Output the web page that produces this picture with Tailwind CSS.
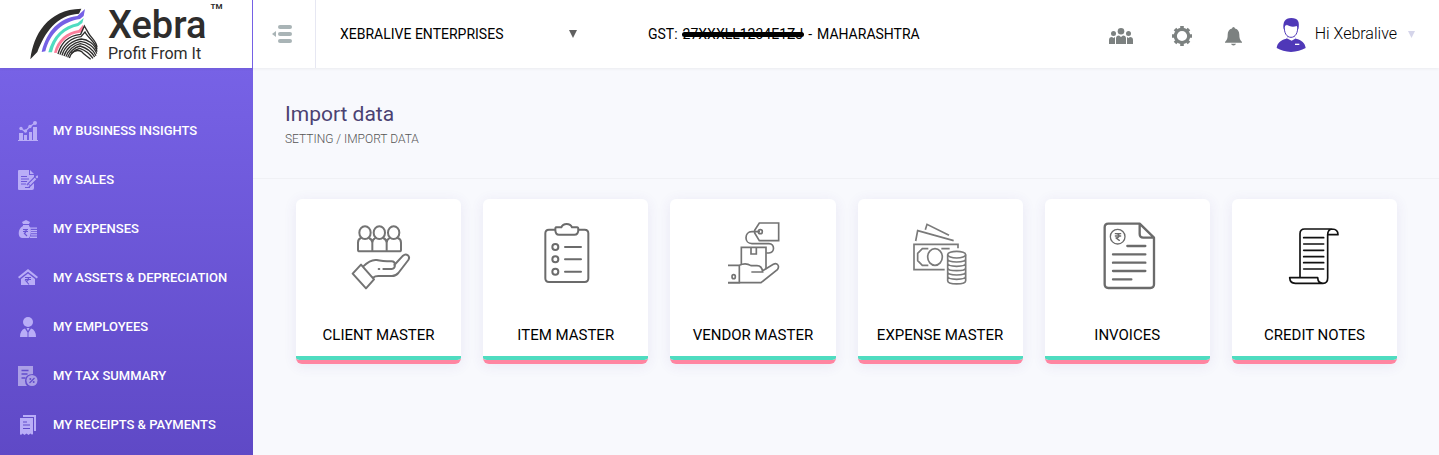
<!DOCTYPE html>
<html lang="en">
<head>
  <meta charset="UTF-8">
  <meta name="viewport" content="width=device-width, initial-scale=1.0">
  <title>Import data</title>
  <script src="https://cdn.jsdelivr.net/npm/@tailwindcss/browser@4"></script>
</head>
<body class="font-[Roboto,sans-serif]">
<div class="min-h-screen flex flex-col bg-[#f8f9fd]">

  <!-- top bar -->
  <header class="h-[68px] flex items-stretch bg-white shadow-[0_1px_3px_rgba(0,0,0,0.06)] z-10">
    <a href="#" class="w-[253px] shrink-0 flex gap-[10px] pl-[30px] border-r border-[#7561e5]">
      <svg class="w-[68px] h-[53px] mt-2" viewBox="90 24 204 159" fill="none" aria-hidden="true">
        <path fill="#2e2d2c" d="M91 178C100 105 142 28 244 26L237 41C170 44 134 98 112 156Z"/>
        <path fill="#7560e5" d="M125 156C140 92 178 55 232 48L255 27L251 48L240 57C190 64 150 98 136 154Z"/>
        <path fill="#4fdcc0" d="M145 157C156 110 190 77 233 69L251 54L247 69L235 78C195 86 166 112 156 157Z"/>
        <path fill="#fb7e9b" d="M162 158C172 118 200 96 236 90L249 74L250 92L240 98C205 102 180 124 170 159Z"/>
        <g stroke="#2e2d2c" stroke-width="4">
          <path d="M174 162C184 125 210 106 242 103L253 78L266 100C274 114 290 124 291 142"/>
          <path d="M180 164C189 133 213 113 243 110L255 96C262 112 286 124 291 148"/>
          <path d="M186 166C194 139 217 121 244 117C262 118 285 132 291 155"/>
          <path d="M192 168C199 145 220 128 242 124C262 126 284 141 290 161"/>
          <path d="M198 170C204 151 222 135 241 131C260 134 280 148 288 167"/>
          <path d="M203 172C207 156 224 142 240 138C258 143 274 154 284 171"/>
          <path d="M208 174C212 160 225 149 239 145C254 150 268 160 279 175"/>
          <path d="M214 160C224 151 235 149 245 155C252 164 262 168 272 178"/>
        </g>
      </svg>
      <div class="pt-[3px] text-[#2e2d2c]">
        <div class="flex items-start gap-1">
          <span class="text-[38px] leading-[44px] font-medium">Xebra</span>
          <span class="text-[8px] leading-2 font-bold">TM</span>
        </div>
        <div class="text-[16px] leading-[14px] whitespace-nowrap">Profit From It</div>
      </div>
    </a>

    <button type="button" aria-label="Toggle menu" class="w-[63px] shrink-0 flex items-center justify-center pr-1 border-r border-[#e6e7f2]">
      <svg class="w-5 h-5" viewBox="0 0 20 20" fill="#a9b4b6">
        <path d="M0 10l4-3v6z"/>
        <rect x="6" y="1" width="14" height="4" rx="2"/>
        <rect x="6" y="8" width="14" height="4" rx="2"/>
        <rect x="6" y="15" width="14" height="4" rx="2"/>
      </svg>
    </button>

    <div class="flex-1 flex items-center pl-6 pr-6">
      <div class="relative w-60 shrink-0">
        <select aria-label="Company" class="appearance-none w-full bg-transparent text-[14px] leading-5 text-black">
          <option>XEBRALIVE ENTERPRISES</option>
        </select>
        <svg class="absolute right-[3px] top-2 w-2 h-2 pointer-events-none" viewBox="0 0 8 8"><path fill="#606060" d="M0 0h8L4 8z"/></svg>
      </div>

      <p class="ml-17 flex gap-[5px] text-[14px] leading-5 text-black whitespace-nowrap">
        <span>GST:</span>
        <span class="relative">27XXXLL1234E1ZJ<span class="absolute -inset-x-px top-2 h-[5px] rounded-full bg-black"></span></span>
        <span>-</span>
        <span>MAHARASHTRA</span>
      </p>

      <div class="ml-auto flex items-center">
        <button type="button" aria-label="Users">
          <svg class="w-6 h-4 mt-1" viewBox="0 0 24 16" fill="#7c8180">
            <circle cx="12" cy="3.300" r="3.300"/>
            <circle cx="4.500" cy="5.500" r="2.500"/>
            <circle cx="19.500" cy="5.500" r="2.500"/>
            <path d="M7 16v-5.500Q7 7.500 10 7.500l2 1.500 2-1.500q3 0 3 3V16z"/>
            <path d="M0 16v-4q0-3 3-3l1.500 1L6 9v7zM24 16v-4q0-3-3-3l-1.500 1L18 9v7z"/>
          </svg>
        </button>
        <button type="button" aria-label="Settings" class="ml-[39px]">
          <svg class="w-5 h-5 mt-1" viewBox="0 0 20 20" fill="none" stroke="#7c8180">
            <circle cx="10" cy="10" r="6.700" stroke-width="3.200"/>
            <path stroke-width="3.600" d="M10 0v2.500M10 17.500V20M0 10h2.500M17.500 10H20M3 3l1.700 1.700M15.300 15.300L17 17M3 17l1.700-1.700M15.300 4.700L17 3"/>
          </svg>
        </button>
        <button type="button" aria-label="Notifications" class="ml-[33px]">
          <svg class="w-[17px] h-5 mt-1" viewBox="0 0 17 20" fill="#7c8180">
            <path d="M8.500 1q1.300 0 1.500 1.500c3 .7 4.300 3 4.300 6 0 4 .7 5.500 2.700 7.500v.8H0V16c2-2 2.700-3.500 2.700-7.500 0-3 1.300-5.300 4.300-6Q7.200 1 8.500 1zM6 17.800h5q-.5 1.700-2.500 1.700T6 17.800z"/>
          </svg>
        </button>
        <button type="button" class="ml-[34px] flex items-center">
          <svg class="w-[30px] h-[34px] mt-[2px]" viewBox="0 0 90 102" aria-hidden="true">
            <path fill="#4f38b8" d="M2 90C4 74 14 66 31 62L37 53H54L60 62C77 66 87 74 89 90Q70 101 45 102Q20 101 2 90Z"/>
            <path fill="#fff" d="M32 61L37 54H54L60 61L47 68z"/>
            <path fill="#fff" stroke="#4f38b8" stroke-width="3" d="M25 20C23 45 32 58 45 58S67 45 65 20z"/>
            <path fill="#4f38b8" d="M23 34C20 12 26 0 46 0C66 0 72 10 67 34L62 24C50 29 39 25 32 19Q25 24 23 34Z"/>
            <path stroke="#fff" stroke-width="4" d="M57 79h13"/>
          </svg>
          <span class="ml-[9px] text-[16px] leading-5 font-light text-black">Hi Xebralive</span>
          <svg class="ml-[11px] w-[7px] h-[7px]" viewBox="0 0 7 7"><path fill="#d5d5ea" d="M0 0h7L3.500 7z"/></svg>
        </button>
      </div>
    </div>
  </header>

  <div class="flex-1 flex">
    <!-- sidebar -->
    <nav class="w-[253px] shrink-0 pt-[38px] bg-linear-to-b from-[#7762e6] to-[#5f49c6] text-[13px] leading-4 font-medium text-white">
      <a href="#" class="h-[49px] flex items-center gap-[15px] pl-[18px]">
        <svg class="w-5 h-5 shrink-0" viewBox="0 0 20 20" fill="#b9adf7">
          <path d="M0 19h20v1H0zM1 12h4v7H1zM6 14h3v5H6zM11 11h3v8h-3zM15 6h4v13h-4z"/>
          <path fill="none" stroke="#b9adf7" stroke-width="1.300" d="M3 7.500l4 3 5-5 5-3.500"/>
          <circle cx="3" cy="7.500" r="1.700"/><circle cx="7.500" cy="10" r="1.700"/><circle cx="12" cy="5.500" r="1.700"/><circle cx="17" cy="2" r="2"/>
        </svg>
        MY BUSINESS INSIGHTS
      </a>
      <a href="#" class="h-[49px] flex items-center gap-[15px] pl-[18px]">
        <svg class="w-5 h-5 shrink-0" viewBox="0 0 20 20" fill="none">
          <path fill="#b9adf7" d="M1 0h10v5h5v13q0 2-2 2H1q-1 0-1-1V1q0-1 1-1zM12 0l4 4h-4z"/>
          <path stroke="#6d58d9" stroke-width="1" d="M3 6.500h6M3 9h8M3 11.500h6M3 14h5M7 17.500h5"/>
          <path stroke="#6d58d9" stroke-width="4.500" d="M10 16l9-9"/>
          <path stroke="#b9adf7" stroke-width="2.200" d="M11.500 14.500l6-6M18.200 7.800L20 6M10 16l1-1"/>
        </svg>
        MY SALES
      </a>
      <a href="#" class="h-[49px] flex items-center gap-[15px] pl-[18px]">
        <svg class="w-5 h-5 shrink-0" viewBox="0 0 20 20" fill="#b9adf7">
          <path d="M4 3l2-1 2-1 2 1 2 1-1 2H5zM5 6h6v1c3 2 2 10 0 12H4C-1 18 0 9 5 7z"/>
          <path fill="none" stroke="#6954d5" stroke-width="1.100" d="M5 10.500h5M5 12.500h5M6 10.500q3 0 2 2t-2 1.500l3 3"/>
          <path d="M12 8.500h7v1.200h-7zM13 11h6v1.200h-6zM13 13h6v1.200h-6zM13 15.200h6v1.200h-6zM12 17.600h7V19h-7z"/>
        </svg>
        MY EXPENSES
      </a>
      <a href="#" class="h-[49px] flex items-center gap-[15px] pl-[18px]">
        <svg class="w-5 h-5 shrink-0" viewBox="0 0 20 20" fill="#b9adf7">
          <path d="M10 1l10 8-1.300 1.500L10 3.700l-8.700 6.800L0 9z"/>
          <path d="M10 5.500l7 5.500v6H3v-6z"/>
          <path fill="none" stroke="#6651d1" stroke-width="1.100" d="M7 9.500h6M7 11.500h6M8 9.500q3.500 0 2.500 2t-2.500 1.500l3 3.500"/>
        </svg>
        MY ASSETS &amp; DEPRECIATION
      </a>
      <a href="#" class="h-[49px] flex items-center gap-[15px] pl-[18px]">
        <svg class="w-5 h-5 shrink-0" viewBox="0 0 20 20" fill="#b9adf7">
          <circle cx="10" cy="5" r="5"/>
          <path d="M2 20q0-7 5-8.500l2.500 4V20zM18 20q0-7-5-8.500l-2.500 4V20zM8.500 11h3L10 14z"/>
        </svg>
        MY EMPLOYEES
      </a>
      <a href="#" class="h-[49px] flex items-center gap-[15px] pl-[18px]">
        <svg class="w-5 h-5 shrink-0" viewBox="0 0 20 20" fill="#ab9fe6">
          <path d="M0 0h15v8q-8 0-8 7 0 3 2 5H0z"/>
          <path fill="none" stroke="#624dcc" stroke-width="1.300" d="M3.500 4.500h7M3.500 8h6M3.500 12h4"/>
          <circle cx="14" cy="14.500" r="5.500"/>
          <path fill="none" stroke="#624dcc" stroke-width="1.200" d="M11.500 17l5-5"/>
          <circle cx="12.300" cy="13" r="1" fill="#624dcc"/><circle cx="15.700" cy="16" r="1" fill="#624dcc"/>
        </svg>
        MY TAX SUMMARY
      </a>
      <a href="#" class="h-[49px] flex items-center gap-[15px] pl-[18px]">
        <svg class="w-5 h-5 shrink-0" viewBox="0 0 20 20" fill="#b9adf7">
          <path d="M5 0h13v16h-2V2H5z"/>
          <path d="M2 3h13v16l-1 .8-1.500-1.200-2 1.400-2-1.400-2 1.400-2-1.400L3 20l-1-.8z"/>
          <path fill="none" stroke="#604ac8" stroke-width="1" d="M5 7h4M5 10h7M5 13.500h7"/>
        </svg>
        MY RECEIPTS &amp; PAYMENTS
      </a>
    </nav>

    <main class="flex-1">
      <div class="px-8 pt-8 pb-7 border-b border-[#f0f1f5]">
        <h1 class="text-[21px] leading-7 text-[#4b4272]">Import data</h1>
        <p class="text-[12px] leading-[22px] font-light text-[#555]"><a href="#">SETTING</a> / IMPORT DATA</p>
      </div>

      <!-- import cards -->
      <div class="grid grid-cols-6 gap-[22px] pl-[43px] pr-[42px] pt-5 text-[15px] leading-5 text-black text-center">
        <a href="#" class="bg-white rounded-[6px] overflow-hidden border-b-4 border-[#ff85a1] shadow-[0_2px_14px_rgba(80,60,150,0.09)]">
          <svg class="mx-auto mt-[21px] w-[72px] h-[72px]" viewBox="175 90 216 216" fill="none" stroke="#737373" stroke-width="6" stroke-linejoin="round" stroke-linecap="round">
            <ellipse cx="241" cy="128" rx="17" ry="19"/><ellipse cx="284" cy="128" rx="17" ry="19"/><ellipse cx="327" cy="128" rx="17" ry="19"/>
            <path d="M229 144Q220 147 220 158V179Q220 184 225 184H344Q349 184 349 179V158Q349 147 339 144M253 144Q263 149 263 158V184M272 144Q263 149 263 158M296 144Q306 149 306 158V184M315 144Q306 149 306 158"/>
            <path d="M229 224L204 251L244 295L268 268ZM236 229C252 213 262 208 276 210Q292 214 321 214C334 214 334 236 321 237H296M282 237h2M329 225L355 197C365 188 378 199 371 210L341 249Q333 258 322 258H281Q271 258 265 263"/>
          </svg>
          <div class="mt-[33px] mb-[11px]">CLIENT MASTER</div>
          <div class="h-1 bg-[#4fdcc0]"></div>
        </a>
        <a href="#" class="bg-white rounded-[6px] overflow-hidden border-b-4 border-[#ff85a1] shadow-[0_2px_14px_rgba(80,60,150,0.09)]">
          <svg class="mx-auto mt-[21px] w-[72px] h-[72px]" viewBox="166 90 216 216" fill="none" stroke="#6b6b6b" stroke-width="6" stroke-linejoin="round" stroke-linecap="round">
            <path d="M240 119H223Q212 119 212 130V265Q212 276 223 276H330Q341 276 341 265V130Q341 119 330 119H312"/>
            <path d="M244 112H260Q264 102 276 102T292 112H307Q311 112 311 119Q311 134 299 134H253Q242 134 242 119Q242 112 244 112Z"/>
            <circle cx="242" cy="171" r="9"/><circle cx="242" cy="208" r="9"/><circle cx="242" cy="245" r="9"/>
            <path d="M271 171H319M271 208H319M271 245H319"/>
          </svg>
          <div class="mt-[33px] mb-[11px]">ITEM MASTER</div>
          <div class="h-1 bg-[#4fdcc0]"></div>
        </a>
        <a href="#" class="bg-white rounded-[6px] overflow-hidden border-b-4 border-[#ff85a1] shadow-[0_2px_14px_rgba(80,60,150,0.09)]">
          <svg class="mx-auto mt-[21px] w-[72px] h-[72px]" viewBox="171 90 216 216" fill="none" stroke="#737373" stroke-width="5">
            <path d="M298 99H356V152H298L284 129V121ZM300 125H276C252 125 252 161 276 161H327C345 161 345 189 327 189H319"/>
            <circle cx="301" cy="125" r="6"/>
            <path d="M244 222V172H318V238M273 174V192H289V174"/>
            <path d="M204 226H238V279H204M238 226C252 219 265 222 273 227H291Q306 227 308 246H274M308 242L340 223C352 217 360 228 352 239L303 278H204"/>
            <ellipse cx="221" cy="260" rx="5" ry="6"/>
          </svg>
          <div class="mt-[33px] mb-[11px]">VENDOR MASTER</div>
          <div class="h-1 bg-[#4fdcc0]"></div>
        </a>
        <a href="#" class="bg-white rounded-[6px] overflow-hidden border-b-4 border-[#ff85a1] shadow-[0_2px_14px_rgba(80,60,150,0.09)]">
          <svg class="mx-auto mt-[21px] w-[72px] h-[72px]" viewBox="164 90 216 216" fill="none" stroke="#7a7a7a" stroke-width="5">
            <path d="M228 119L233 103L299 136M199 153L205 122L313 152"/>
            <path d="M286 239H194V163H326V175M237 176H219L205 190V212L219 226H237M276 176H301"/>
            <ellipse cx="257" cy="201" rx="22" ry="25"/>
            <ellipse cx="322" cy="194" rx="27" ry="10"/>
            <path d="M295 194V272C295 285 349 285 349 272V194M295 207C295 219 349 219 349 207M295 220C295 232 349 232 349 220M295 233C295 245 349 245 349 233M295 246C295 258 349 258 349 246M295 259C295 271 349 271 349 259"/>
          </svg>
          <div class="mt-[33px] mb-[11px]">EXPENSE MASTER</div>
          <div class="h-1 bg-[#4fdcc0]"></div>
        </a>
        <a href="#" class="bg-white rounded-[6px] overflow-hidden border-b-4 border-[#ff85a1] shadow-[0_2px_14px_rgba(80,60,150,0.09)]">
          <svg class="mx-auto mt-[21px] w-[72px] h-[72px]" viewBox="169 90 216 216" fill="none" stroke="#6b6b6b" stroke-width="7" stroke-linejoin="round" stroke-linecap="round">
            <path d="M315 101H221Q210 101 210 112V283Q210 294 221 294H347Q358 294 358 283V143ZM315 101V132Q315 143 326 143H358"/>
            <path d="M278 168H332M235 193H332M235 218H332M235 243H332M235 268H290"/>
            <circle cx="249" cy="140" r="22" stroke-width="4"/>
            <path stroke-width="4" d="M242 131H258M242 138H258M244 131C256 131 256 144 244 144L254 151"/>
          </svg>
          <div class="mt-[33px] mb-[11px]">INVOICES</div>
          <div class="h-1 bg-[#4fdcc0]"></div>
        </a>
        <a href="#" class="bg-white rounded-[6px] overflow-hidden border-b-4 border-[#ff85a1] shadow-[0_2px_14px_rgba(80,60,150,0.09)]">
          <svg class="mx-auto mt-[21px] w-[72px] h-[72px]" viewBox="730 90 216 216" fill="none" stroke="#111" stroke-width="5" stroke-linejoin="round" stroke-linecap="round">
            <path d="M796 262V131Q796 117 810 117H892Q910 117 910 134H880M892 117Q879 119 879 134V264Q879 280 865 280H782Q766 280 765 263H849Q850 280 865 280"/>
            <path d="M807 143H867M807 162H867M807 181H867M807 200H867M807 218H867M807 237H867"/>
          </svg>
          <div class="mt-[33px] mb-[11px]">CREDIT NOTES</div>
          <div class="h-1 bg-[#4fdcc0]"></div>
        </a>
      </div>
    </main>
  </div>
</div>
</body>
</html>
